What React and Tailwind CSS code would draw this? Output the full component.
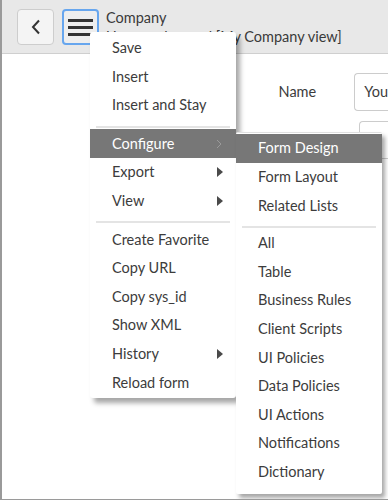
import React from "react";

const font = { fontFamily: "Lato, 'Open Sans', sans-serif" };

function Arrow() {
  return (
    <svg width="6" height="10" viewBox="0 0 6 10" className="ml-auto">
      <path d="M0 0 L6 5 L0 10 Z" fill="#4a4a4a" />
    </svg>
  );
}

function Item({ label, arrow, active, chevron }) {
  return (
    <div
      className={
        "h-[28.6px] flex items-center pl-[22px] pr-[13px] text-[14.5px] " +
        (active ? "bg-[#777777] text-white" : "text-[#3c3c3c]")
      }
    >
      <span>{label}</span>
      {arrow && <Arrow />}
      {chevron && (
        <svg width="6" height="10" viewBox="0 0 6 10" className="ml-auto mr-[1px]">
          <path d="M1 1 L5 5 L1 9" fill="none" stroke="#9a9a9a" strokeWidth="1" />
        </svg>
      )}
    </div>
  );
}

function Divider({ mt, mb }) {
  return <div className={"mx-[6px] h-[2px] bg-[#e4e4e4] " + mt + " " + mb} />;
}

export default function App() {
  return (
    <div
      className="relative w-[388px] h-[500px] bg-white border-l-2 border-b border-[#9a9a9a] overflow-hidden"
      style={font}
    >
      {/* Header */}
      <div className="h-[54px] bg-[#e8e8e8] border-b border-[#cfcfcf] flex items-start pl-[15px] pt-[9px]">
        <div className="w-[37px] h-[36px] rounded-[4px] bg-[#f4f4f4] border border-[#cdcdcd] flex items-center justify-center">
          <svg width="10" height="16" viewBox="0 0 10 16">
            <path d="M8 1.5 L2 8 L8 14.5" fill="none" stroke="#333" strokeWidth="2" />
          </svg>
        </div>
        <div className="ml-[8px] w-[37px] h-[36px] rounded-[4px] bg-[#eeeeee] border-2 border-[#67a6ee] flex flex-col items-center justify-center gap-[4px]">
          <div className="w-[25px] h-[3px] bg-[#333]" />
          <div className="w-[25px] h-[3px] bg-[#333]" />
          <div className="w-[25px] h-[3px] bg-[#333]" />
        </div>
        <div className="ml-[7px] -mt-[1px] flex flex-col text-[14.5px] leading-[19px] text-[#3a3a3a]">
          <span>Company</span>
          <span>Unnamed record [My Company view]</span>
        </div>
      </div>

      {/* Form content */}
      <div className="flex items-center pt-[19px]">
        <div className="w-[319px] text-right text-[14.5px] text-[#3c3c3c]">Name</div>
        <div className="ml-[38px] flex-1 h-[38px] rounded-l-[4px] border border-r-0 border-[#cccccc] flex items-center pl-[9px] text-[14.5px] text-[#3c3c3c]">
          You
        </div>
      </div>
      <div className="ml-[357px] mt-[10px] h-[38px] rounded-l-[4px] border border-r-0 border-[#cccccc]" />

      {/* Main menu */}
      <div className="absolute left-[88px] top-[32px] w-[146px] bg-white rounded-[3px] pt-[1.7px] pb-[1px] shadow-[4px_5px_5px_rgba(0,0,0,0.35)]">
        <Item label="Save" />
        <Item label="Insert" />
        <Item label="Insert and Stay" />
        <Divider mt="mt-[6.5px]" mb="mb-[1.5px]" />
        <Item label="Configure" active chevron />
        <Item label="Export" arrow />
        <Item label="View" arrow />
        <Divider mt="mt-[6px]" mb="mb-[2px]" />
        <Item label="Create Favorite" />
        <Item label="Copy URL" />
        <Item label="Copy sys_id" />
        <Item label="Show XML" />
        <Item label="History" arrow />
        <Item label="Reload form" />
      </div>

      {/* Submenu */}
      <div className="absolute left-[234px] top-[132px] w-[146px] bg-white rounded-[2px] border-t border-[#e0e0e0] pt-[1px] pb-[8px] shadow-[3px_4px_4px_rgba(0,0,0,0.35)]">
        <Item label="Form Design" active />
        <Item label="Form Layout" />
        <Item label="Related Lists" />
        <Divider mt="mt-[6px]" mb="mb-[1px]" />
        <Item label="All" />
        <Item label="Table" />
        <Item label="Business Rules" />
        <Item label="Client Scripts" />
        <Item label="UI Policies" />
        <Item label="Data Policies" />
        <Item label="UI Actions" />
        <Item label="Notifications" />
        <Item label="Dictionary" />
      </div>
    </div>
  );
}
